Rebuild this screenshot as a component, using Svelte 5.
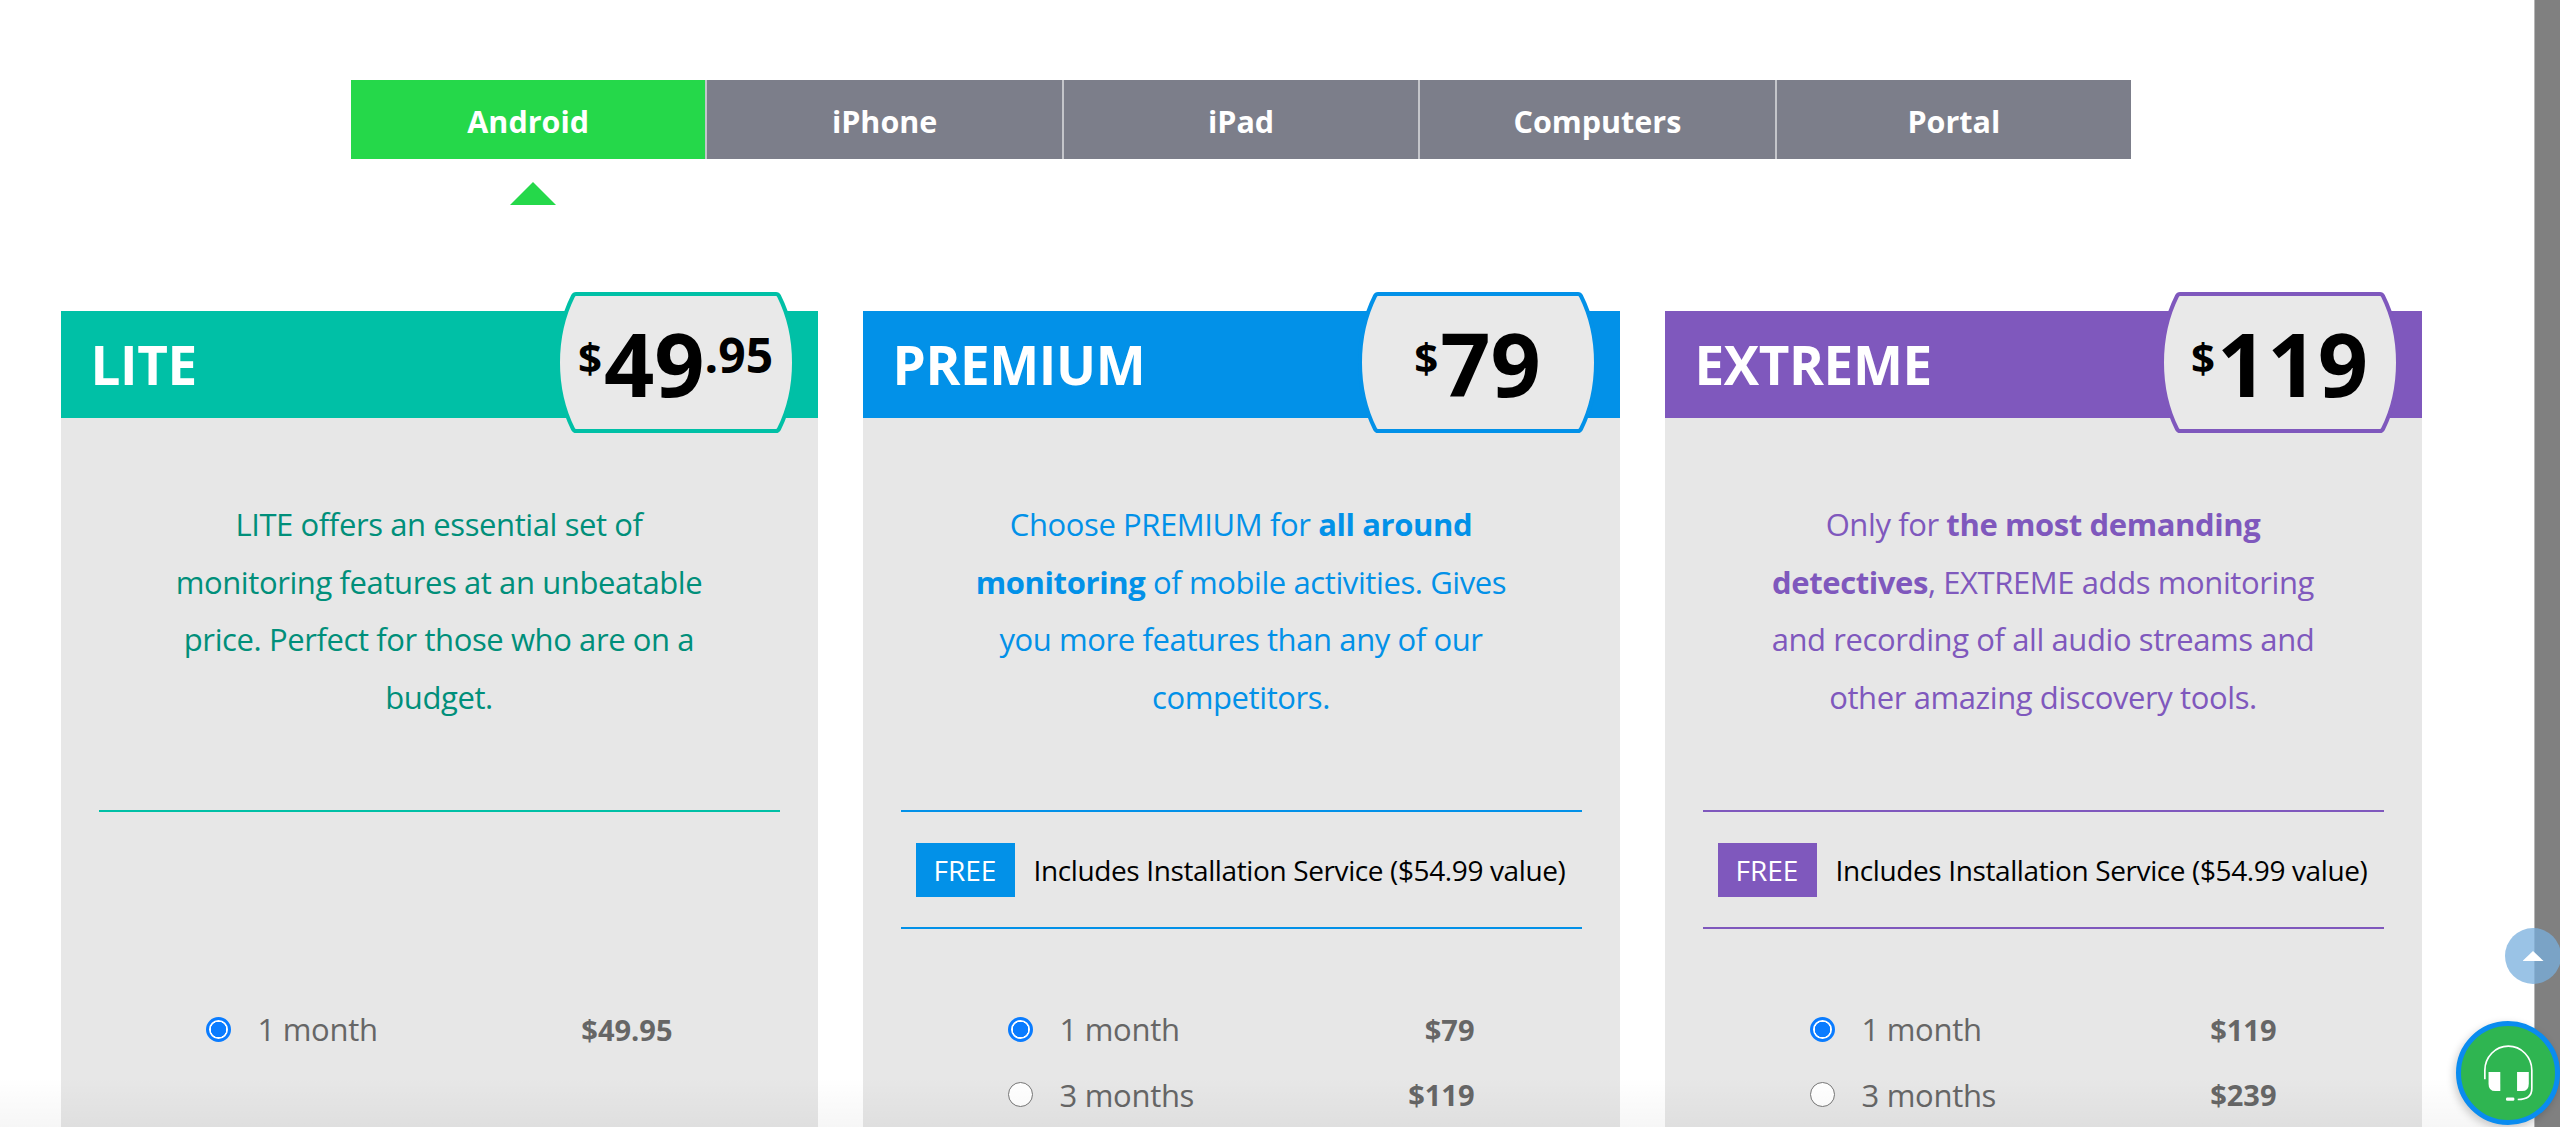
<script>
  const tabs = ['Android', 'iPhone', 'iPad', 'Computers', 'Portal'];

  const plans = [
    {
      id: 'lite',
      name: 'LITE',
      dollars: '49',
      cents: '.95',
      blurb: 'LITE offers an essential set of<br>monitoring features at an unbeatable<br>price. Perfect for those who are on a<br>budget.',
      free: false,
      terms: [['1 month', '$49.95']]
    },
    {
      id: 'premium',
      name: 'PREMIUM',
      dollars: '79',
      blurb: 'Choose PREMIUM for <b>all around</b><br><b>monitoring</b> of mobile activities. Gives<br>you more features than any of our<br>competitors.',
      free: true,
      terms: [['1 month', '$79'], ['3 months', '$119']]
    },
    {
      id: 'extreme',
      name: 'EXTREME',
      dollars: '119',
      blurb: 'Only for <b>the most demanding</b><br><b>detectives</b>, EXTREME adds monitoring<br>and recording of all audio streams and<br>other amazing discovery tools.',
      free: true,
      terms: [['1 month', '$119'], ['3 months', '$239']]
    }
  ];
</script>

<div class="page">
  <main class="content">
    <nav class="tabs">
      {#each tabs as tab, i}
        <button class="tab" class:active={i === 0}>{tab}</button>
      {/each}
    </nav>
    <div class="marker"></div>

    <section class="plans">
      {#each plans as plan}
        <article class="card {plan.id}">
          <header class="head">
            <h2>{plan.name}</h2>
            <div class="badge">
              <svg viewBox="0 0 240 141" aria-hidden="true">
                <path d="M20 2 H220 Q222 2 223 4 C232 22 238 45 238 70.5 C238 96 232 119 223 137 Q222 139 220 139 H20 Q18 139 17 137 C8 119 2 96 2 70.5 C2 45 8 22 17 4 Q18 2 20 2 Z" />
              </svg>
              <div class="price">
                <span class="up dollar">$</span><span>{plan.dollars}</span>{#if plan.cents}<span class="up cents">{plan.cents}</span>{/if}
              </div>
            </div>
          </header>

          <p class="blurb">{@html plan.blurb}</p>

          <div class="free" class:empty={!plan.free}>
            {#if plan.free}
              <span class="tag">FREE</span>
              <span class="note">Includes Installation Service ($54.99 value)</span>
            {/if}
          </div>

          <div class="terms">
            {#each plan.terms as term, i}
              <label class="term">
                <input type="radio" name={plan.id} checked={i === 0} />
                <span class="len">{term[0]}</span>
                <span class="cost">{term[1]}</span>
              </label>
            {/each}
          </div>
        </article>
      {/each}
    </section>
  </main>
  <div class="scrollbar"></div>

  <div class="fade"></div>
  <button class="to-top" aria-label="Back to top"><span></span></button>
  <button class="chat" aria-label="Chat">
    <svg viewBox="48 363 310 310" aria-hidden="true">
      <path class="wire" d="M134 537 V510 A70 72 0 0 1 274 510 V565 Q274 597 232 597" />
      <path class="cup" d="M145 515 H180 V572 H165 Q145 572 145 550 Z" />
      <path class="cup" d="M230 515 H265 V550 Q265 572 245 572 H230 Z" />
      <rect class="cup" x="197" y="591" width="25" height="10" rx="4" />
    </svg>
  </button>
</div>

<style>
  :global(body) {
    margin: 0;
    background: #fff;
  }

  .page {
    position: relative;
    display: flex;
    height: 1127px;
    overflow: hidden;
    font-family: "Open Sans", "Noto Sans", sans-serif;
  }
  .content {
    flex: 1;
    min-width: 0;
    padding-top: 80px;
  }
  .scrollbar {
    width: 25px;
    background: #808080;
    border-left: 1px solid #b5b5b5;
  }

  .tabs {
    display: flex;
    margin-left: 351px;
    width: 1780px;
  }
  .tab {
    flex: 1;
    height: 79px;
    padding: 2px 0 0;
    border: 0;
    border-right: 2px solid #c4c5ca;
    background: #7c7e8a;
    color: #fff;
    font: inherit;
    font-size: 30.5px;
    font-weight: 700;
  }
  .tab:last-child {
    border-right: 0;
  }
  .tab.active {
    background: #25d84a;
  }
  .marker {
    width: 46px;
    height: 23px;
    margin: 23px 0 0 510px;
    background: #25d84a;
    clip-path: polygon(50% 0, 100% 100%, 0 100%);
  }

  .plans {
    display: grid;
    grid-template-columns: repeat(3, 757px);
    gap: 45px;
    margin-top: 106px;
    padding-left: 60.5px;
  }
  .lite { --accent: #00c0a6; --ink: #008f7a; }
  .premium { --accent: #0291e8; --ink: #0291e8; }
  .extreme { --accent: #7f58bd; --ink: #7f58bd; }

  .card {
    height: 900px;
    background: #e7e7e7;
  }
  .head {
    position: relative;
    display: flex;
    align-items: center;
    height: 107px;
    padding-left: 30px;
    background: var(--accent);
  }
  h2 {
    margin: 0;
    color: #fff;
    font-size: 53px;
    font-weight: 700;
    letter-spacing: -0.4px;
    line-height: 1;
  }
  .badge {
    position: absolute;
    top: -19px;
    right: 22px;
    display: flex;
    align-items: center;
    justify-content: center;
    width: 240px;
    height: 141px;
  }
  .badge svg {
    position: absolute;
    left: 0;
    top: 0;
    width: 240px;
    height: 141px;
    overflow: visible;
    fill: #e9e9e9;
    stroke: var(--accent);
    stroke-width: 4;
  }
  .price {
    position: relative;
    color: #000;
    font-size: 88px;
    font-weight: 700;
    line-height: 1;
    white-space: nowrap;
  }
  .up {
    vertical-align: 24px;
  }
  .dollar {
    margin-right: 2px;
    font-size: 42px;
  }
  .cents {
    font-size: 48px;
  }

  .blurb {
    margin: 0;
    padding-top: 78px;
    color: var(--ink);
    font-size: 31px;
    letter-spacing: -0.4px;
    line-height: 57.6px;
    text-align: center;
  }
  .free {
    display: flex;
    align-items: center;
    gap: 19px;
    box-sizing: border-box;
    height: 119px;
    margin: 84px 38px 0;
    padding-left: 15px;
    border-top: 2px solid var(--accent);
    border-bottom: 2px solid var(--accent);
  }
  .free.empty {
    border-bottom-color: transparent;
  }
  .tag {
    display: flex;
    align-items: center;
    justify-content: center;
    width: 99px;
    height: 54px;
    background: var(--accent);
    color: #fff;
    font-size: 28px;
  }
  .note {
    color: #000;
    font-size: 28px;
    letter-spacing: -0.38px;
    white-space: nowrap;
  }

  .terms {
    margin-top: 67px;
    padding-left: 145px;
  }
  .term {
    display: flex;
    align-items: center;
    width: 467px;
    height: 65.5px;
  }
  input {
    appearance: none;
    box-sizing: border-box;
    width: 25px;
    height: 25px;
    margin: 0 27px 0 0;
    border: 1.5px solid #767676;
    border-radius: 50%;
    background: #fff;
  }
  input:checked {
    border: 3px solid #0a7cff;
    background: radial-gradient(circle, #0a7cff 0 7.5px, #fff 8px);
  }
  .len {
    flex: 1;
    color: #666;
    font-size: 31px;
    letter-spacing: -0.3px;
  }
  .cost {
    color: #666;
    font-size: 29px;
    font-weight: 700;
  }

  .fade {
    position: absolute;
    left: 0;
    right: 25px;
    bottom: 0;
    height: 50px;
    background: linear-gradient(rgba(0, 0, 0, 0), rgba(0, 0, 0, 0.035));
    pointer-events: none;
  }
  .to-top {
    position: absolute;
    left: 2505px;
    top: 928px;
    display: flex;
    align-items: center;
    justify-content: center;
    width: 56px;
    height: 56px;
    padding: 0;
    border: 0;
    border-radius: 50%;
    background: rgba(120, 175, 222, 0.75);
  }
  .to-top span {
    width: 21px;
    height: 10px;
    background: #fff;
    clip-path: polygon(50% 0, 100% 100%, 0 100%);
  }
  .chat {
    position: absolute;
    left: 2456px;
    top: 1021px;
    box-sizing: border-box;
    width: 104px;
    height: 104px;
    padding: 0;
    border: 5px solid #0a8cf0;
    border-radius: 50%;
    background: #2fb551;
    box-shadow: -2px 3px 8px rgba(0, 0, 0, 0.2);
  }
  .chat svg {
    position: absolute;
    left: -5px;
    top: -5px;
    width: 104px;
    height: 104px;
  }
  .wire {
    fill: none;
    stroke: #fff;
    stroke-width: 5;
  }
  .cup {
    fill: #fff;
  }
</style>
